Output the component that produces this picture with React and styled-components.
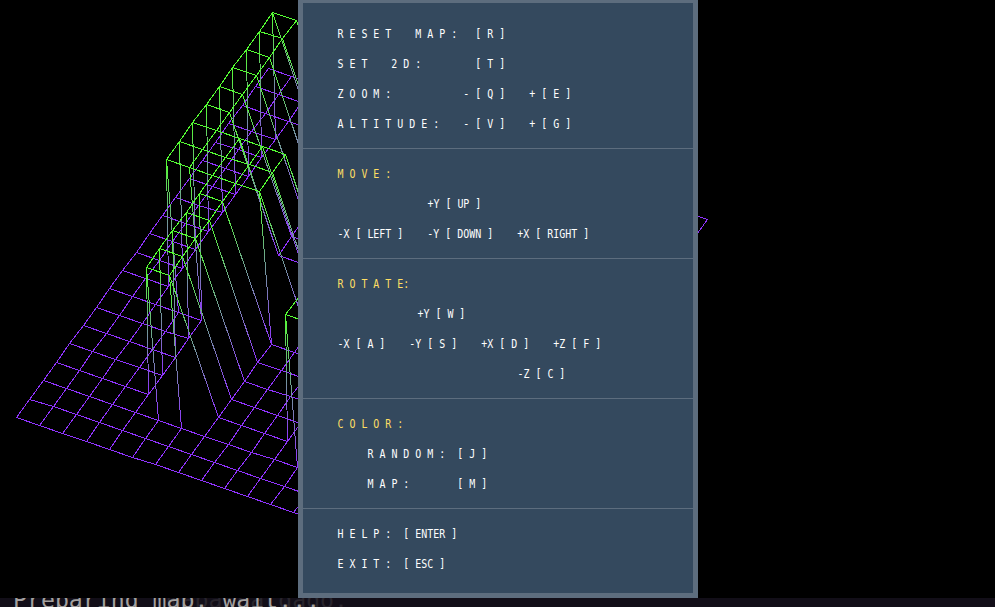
import React from "react";
import styled, { createGlobalStyle } from "styled-components";

const GlobalStyle = createGlobalStyle`
  body { margin: 0; background: #000; overflow: hidden; }
`;

const Screen = styled.div`
  display: grid;
  grid-template: 598px 9px / 995px;
  width: 995px;
  height: 607px;
  overflow: hidden;
  background: #000;
`;

const Viewport = styled.main`
  display: grid;
  grid-template-columns: 298px 400px 297px;
  overflow: hidden;
`;

const Wireframe = styled.svg`
  grid-area: 1 / 1 / 2 / 4;
  display: block;
  shape-rendering: crispEdges;
`;

const Panel = styled.aside`
  grid-area: 1 / 2 / 2 / 3;
  z-index: 1;
  box-sizing: border-box;
  height: 598px;
  background: #34495e;
  border: 5px solid #5d6d7e;
  border-top-width: 3px;
`;

const Section = styled.section`
  padding: ${(p) => (p.$first ? 16 : 10)}px 0 9px 34px;
  border-bottom: ${(p) => (p.$last ? 0 : 1)}px solid #5d6d7e;
`;

const Row = styled.div`
  height: 30px;
  padding-left: ${(p) => p.$indent || 0}px;
  color: ${(p) => (p.$title ? "#ffdf64" : "#fff")};
`;

const Keys = styled.span`
  display: block;
  width: max-content;
  white-space: pre;
  font: 12.4px/30px "DejaVu Sans Mono", monospace;
  transform: translateX(0.4px) scaleX(0.8037);
  transform-origin: 0 0;
`;

const Terminal = styled.footer`
  display: grid;
  overflow: hidden;
  background: #120e18;
`;

const Output = styled.span`
  grid-area: 1 / 1;
  margin: -12.5px 0 0 13px;
  white-space: pre;
  font: 23.2px/28px "DejaVu Sans Mono", monospace;
  color: ${(p) => (p.$ghost ? "#28242c" : "#a3a09f")};
`;

const SIZE = 20;
const GREEN = "#55ff33";
const PURPLE = "#9033ff";

// Inclusive column/row ranges of the raised strokes of the digits 4 and 2.
const RAISED = [
  [3, 4, 8, 16],
  [5, 6, 3, 10],
  [7, 7, 8, 10],
  [11, 16, 3, 4],
  [11, 12, 5, 9],
  [13, 16, 8, 9],
  [15, 16, 10, 15],
  [11, 14, 15, 16],
];

const isRaised = (i, j) =>
  RAISED.some(([a, b, c, d]) => i >= a && i <= b && j >= c && j <= d);

const snap = (v) => Math.floor(v) + 0.5;

const project = (i, j) =>
  isRaised(i, j)
    ? {
        up: true,
        x: snap(166.1 + (i - 3) * 23.28 + (j - 8) * 13.33),
        y: snap(159.6 + (i - 3) * 7.9 - (j - 8) * 18.37),
      }
    : {
        up: false,
        x: snap(16.7 + i * 23.1 + j * 13.26),
        y: snap(417.4 + i * 7.93 - j * 18.36),
      };

const edges = [];
for (let i = 0; i < SIZE; i++) {
  for (let j = 0; j < SIZE; j++) {
    if (i < SIZE - 1) edges.push([project(i, j), project(i + 1, j)]);
    if (j < SIZE - 1) edges.push([project(i, j), project(i, j + 1)]);
  }
}

function Map3D() {
  return (
    <Wireframe width="995" height="598">
      <defs>
        {edges.map(([a, b], n) =>
          a.up !== b.up ? (
            <linearGradient key={n} id={`edge${n}`} gradientUnits="userSpaceOnUse" x1={a.x} y1={a.y} x2={b.x} y2={b.y}>
              <stop offset="0" stopColor={a.up ? GREEN : PURPLE} />
              <stop offset="1" stopColor={b.up ? GREEN : PURPLE} />
            </linearGradient>
          ) : null
        )}
      </defs>
      {edges.map(([a, b], n) => (
        <line
          key={n}
          x1={a.x}
          y1={a.y}
          x2={b.x}
          y2={b.y}
          stroke={a.up !== b.up ? `url(#edge${n})` : a.up ? GREEN : PURPLE}
        />
      ))}
    </Wireframe>
  );
}

const SECTIONS = [
  [
    { text: "R E S E T    M A P :   [ R ]" },
    { text: "S E T    2 D :         [ T ]" },
    { text: "Z O O M :            - [ Q ]    + [ E ]" },
    { text: "A L T I T U D E :    - [ V ]    + [ G ]" },
  ],
  [
    { text: "M O V E :", title: true },
    { text: "+Y [ UP ]", indent: 90 },
    { text: "-X [ LEFT ]    -Y [ DOWN ]    +X [ RIGHT ]" },
  ],
  [
    { text: "R O T A T E:", title: true },
    { text: "+Y [ W ]", indent: 80 },
    { text: "-X [ A ]    -Y [ S ]    +X [ D ]    +Z [ F ]" },
    { text: "-Z [ C ]", indent: 180 },
  ],
  [
    { text: "C O L O R :", title: true },
    { text: "R A N D O M :  [ J ]", indent: 30 },
    { text: "M A P :        [ M ]", indent: 30 },
  ],
  [{ text: "H E L P :  [ ENTER ]" }, { text: "E X I T :  [ ESC ]" }],
];

export default function App() {
  return (
    <Screen>
      <GlobalStyle />
      <Viewport>
        <Map3D />
        <Panel>
          {SECTIONS.map((rows, s) => (
            <Section key={s} $first={s === 0} $last={s === SECTIONS.length - 1}>
              {rows.map((row) => (
                <Row key={row.text} $title={row.title} $indent={row.indent}>
                  <Keys>{row.text}</Keys>
                </Row>
              ))}
            </Section>
          ))}
        </Panel>
      </Viewport>
      <Terminal>
        <Output $ghost>{"           mapa cargado."}</Output>
        <Output>Preparing map. wait...</Output>
      </Terminal>
    </Screen>
  );
}
